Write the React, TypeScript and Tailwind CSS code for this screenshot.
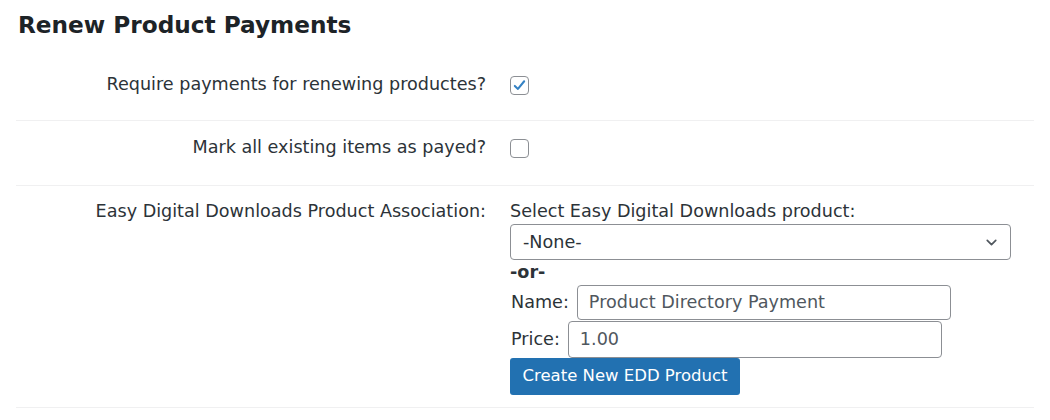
import React, { useState } from 'react';

const font = { fontFamily: '"DejaVu Sans", Verdana, sans-serif' };

function Row({ label, children, className = '' }: { label: string; children: React.ReactNode; className?: string }) {
  return (
    <div className={`flex border-b border-[#f0f0f1] ${className}`}>
      <div className="w-[470px] shrink-0 text-right leading-[26px]">{label}</div>
      <div className="ml-[24px] flex-1">{children}</div>
    </div>
  );
}

function Checkbox({ checked, onChange }: { checked: boolean; onChange: () => void }) {
  return (
    <button
      onClick={onChange}
      className="mt-[5px] h-[19px] w-[19px] rounded-[4px] border border-[#8c8f94] bg-white flex items-center justify-center"
    >
      {checked && (
        <svg viewBox="0 0 20 20" className="h-[17px] w-[17px]">
          <path d="M4.5 10.5 L8.2 14 L15.5 5" fill="none" stroke="#3582c4" strokeWidth="2.4" strokeLinecap="round" strokeLinejoin="round" />
        </svg>
      )}
    </button>
  );
}

export default function App() {
  const [requirePay, setRequirePay] = useState(true);
  const [markPaid, setMarkPaid] = useState(false);

  return (
    <div className="bg-white text-[#2c3338] text-[17.6px] w-[1050px] h-[420px] overflow-hidden" style={font}>
      <div className="px-[18px] h-[58px] pt-[10px]">
        <h2 className="text-[23.2px] font-bold text-[#1d2327] leading-[30px]">Renew Product Payments</h2>
      </div>
      <div className="mx-[16px] w-[1018px]">
        <Row label="Require payments for renewing productes?" className="pt-[13px] pb-[23px]">
          <Checkbox checked={requirePay} onChange={() => setRequirePay(v => !v)} />
        </Row>
        <Row label="Mark all existing items as payed?" className="pt-[13px] pb-[25px]">
          <Checkbox checked={markPaid} onChange={() => setMarkPaid(v => !v)} />
        </Row>
        <Row label="Easy Digital Downloads Product Association:" className="pt-[12px] pb-[12px]">
          <div className="leading-[26px]">Select Easy Digital Downloads product:</div>
          <div className="w-[501px] h-[36px] rounded-[4px] border border-[#8c8f94] flex items-center justify-between pl-[12px] pr-[10px] text-[#2c3338]">
            <span>-None-</span>
            <svg viewBox="0 0 20 20" className="h-[17px] w-[17px]">
              <path d="M5 7.5 L10 12.5 L15 7.5" fill="none" stroke="#50575e" strokeWidth="2" strokeLinecap="round" strokeLinejoin="round" />
            </svg>
          </div>
          <div className="font-bold leading-[24px]">-or-</div>
          <div className="flex items-center gap-[8px] h-[36px]">
            <span className="pl-px">Name:</span>
            <div className="w-[374px] h-[35px] rounded-[4px] border border-[#8c8f94] flex items-center px-[11px] text-[#50575e]">
              Product Directory Payment
            </div>
          </div>
          <div className="flex items-center gap-[8px] h-[38px]">
            <span className="pl-px">Price:</span>
            <div className="w-[374px] h-[37px] rounded-[4px] border border-[#8c8f94] flex items-center px-[11px] text-[#50575e]">
              1.00
            </div>
          </div>
          <button className="w-[230px] h-[37px] rounded-[3px] bg-[#2271b1] text-white text-[16.5px] leading-none">
            Create New EDD Product
          </button>
        </Row>
      </div>
    </div>
  );
}
